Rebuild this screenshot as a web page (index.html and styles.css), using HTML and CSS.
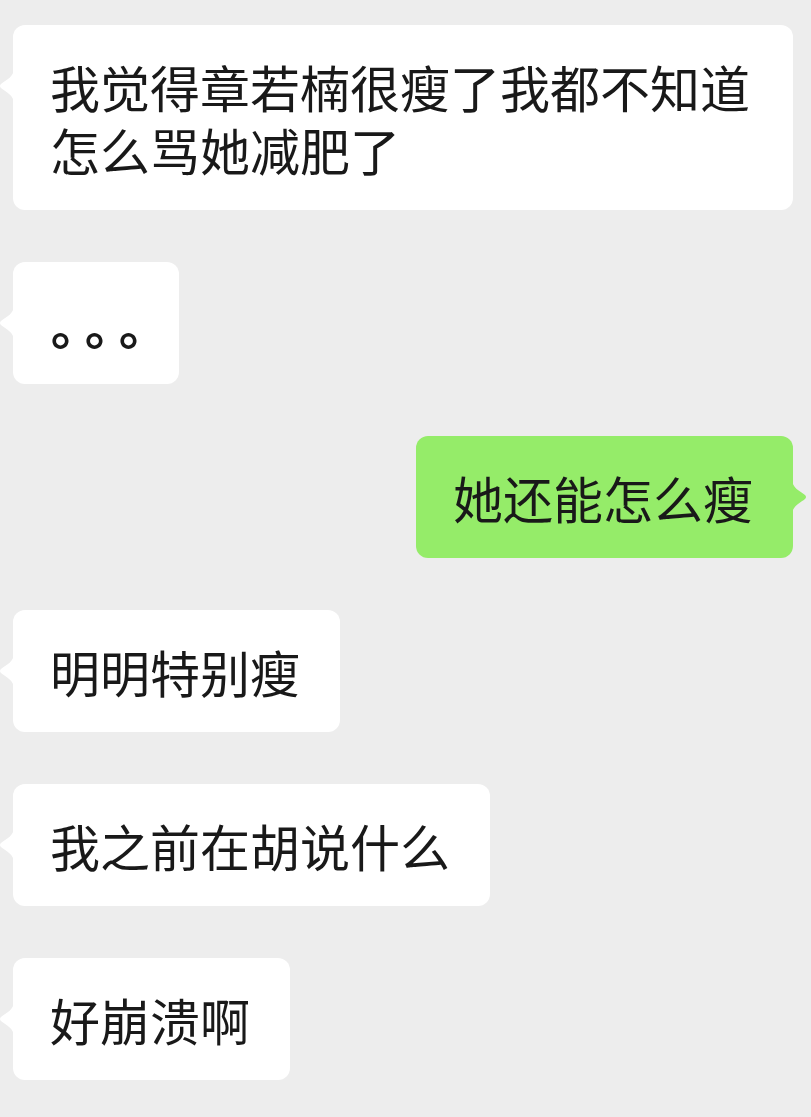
FILE: index.html
```html
<!DOCTYPE html>
<html lang="zh-CN">
<head>
<meta charset="utf-8">
<link rel="stylesheet" href="styles.css">
</head>
<body>
<main class="chat">
  <div class="bubble in">我觉得章若楠很瘦了我都不知道怎么骂她减肥了</div>
  <div class="bubble in dots-bubble"><span class="dots">｡｡｡</span></div>
  <div class="bubble out">她还能怎么瘦</div>
  <div class="bubble in">明明特别瘦</div>
  <div class="bubble in">我之前在胡说什么</div>
  <div class="bubble in">好崩溃啊</div>
</main>
</body>
</html>
```

FILE: styles.css
```css
html, body {
  margin: 0;
  padding: 0;
  background: #ededed;
}
body {
  width: 811px;
  height: 1117px;
  overflow: hidden;
  font-family: "Noto Sans CJK SC", "Noto Sans", sans-serif;
}
.chat {
  display: flex;
  flex-direction: column;
  align-items: flex-start;
  gap: 52px;
  padding: 25px 18px 0 13px;
}
.bubble {
  position: relative;
  box-sizing: border-box;
  max-width: 100%;
  padding: 30px 40px 29px 37px;
  font-size: 50px;
  line-height: 63px;
  color: #191919;
  background: #ffffff;
  border-radius: 12px;
  word-break: break-all;
}
.bubble::before {
  content: "";
  position: absolute;
  top: 43px;
  width: 15px;
  height: 36px;
  background: inherit;
}
.bubble.in::before {
  left: -14px;
  clip-path: path("M15 0 C15 9 7 12 2 16 Q0 18 2 20 C7 24 15 27 15 36 Z");
}
.bubble.out {
  align-self: flex-end;
  background: #95ec69;
}
.bubble.out::before {
  right: -14px;
  clip-path: path("M0 0 C0 9 8 12 13 16 Q15 18 13 20 C8 24 0 27 0 36 Z");
}
.dots-bubble {
  padding-left: 38px;
  padding-right: 26px;
}
.dots {
  font-weight: 700;
  letter-spacing: 9px;
}
```
